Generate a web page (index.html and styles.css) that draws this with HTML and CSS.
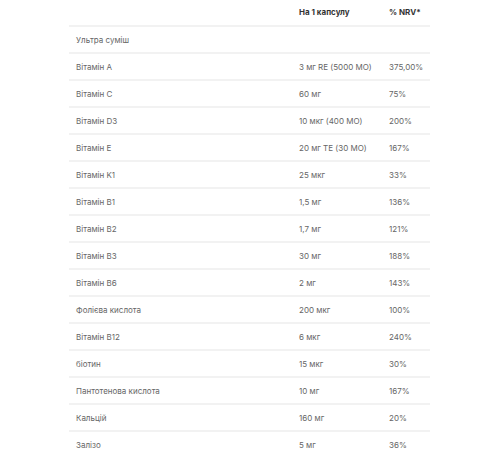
FILE: index.html
```html
<!DOCTYPE html>
<html lang="uk">
<head>
<meta charset="utf-8">
<link rel="stylesheet" href="styles.css">
</head>
<body>
<div class="page">
  <div class="table">
    <div class="row head"><span></span><span>На 1 капсулу</span><span>% NRV*</span></div>
    <div class="row"><span>Ультра суміш</span><span></span><span></span></div>
    <div class="row"><span>Вітамін A</span><span>3 мг RE (5000 МО)</span><span>375,00%</span></div>
    <div class="row"><span>Вітамін C</span><span>60 мг</span><span>75%</span></div>
    <div class="row"><span>Вітамін D3</span><span>10 мкг (400 МО)</span><span>200%</span></div>
    <div class="row"><span>Вітамін E</span><span>20 мг TE (30 МО)</span><span>167%</span></div>
    <div class="row"><span>Вітамін K1</span><span>25 мкг</span><span>33%</span></div>
    <div class="row"><span>Вітамін B1</span><span>1,5 мг</span><span>136%</span></div>
    <div class="row"><span>Вітамін B2</span><span>1,7 мг</span><span>121%</span></div>
    <div class="row"><span>Вітамін B3</span><span>30 мг</span><span>188%</span></div>
    <div class="row"><span>Вітамін B6</span><span>2 мг</span><span>143%</span></div>
    <div class="row"><span>Фолієва кислота</span><span>200 мкг</span><span>100%</span></div>
    <div class="row"><span>Вітамін B12</span><span>6 мкг</span><span>240%</span></div>
    <div class="row"><span>біотин</span><span>15 мкг</span><span>30%</span></div>
    <div class="row"><span>Пантотенова кислота</span><span>10 мг</span><span>167%</span></div>
    <div class="row"><span>Кальцій</span><span>160 мг</span><span>20%</span></div>
    <div class="row"><span>Залізо</span><span>5 мг</span><span>36%</span></div>
  </div>
</div>
</body>
</html>
```
FILE: styles.css
```css
html, body {
  margin: 0;
  padding: 0;
  background: #fff;
}
.page {
  padding-left: 69px;
  font-family: Inter, "Noto Sans", sans-serif;
  font-size: 8px;
  color: #666;
}
.table {
  width: 361px;
}
.row {
  display: grid;
  grid-template-columns: 223px 90px 48px;
  padding-left: 7px;
  padding-top: 1px;
  height: 25px;
  line-height: 25px;
  border-bottom: 2px solid #f2f2f2;
  white-space: nowrap;
  box-sizing: content-box;
}
.row:not(.head) {
  height: 24px;
}
.row.head {
  padding-top: 0;
  height: 25px;
  line-height: 24px;
  font-weight: 700;
  color: #333;
}
```
